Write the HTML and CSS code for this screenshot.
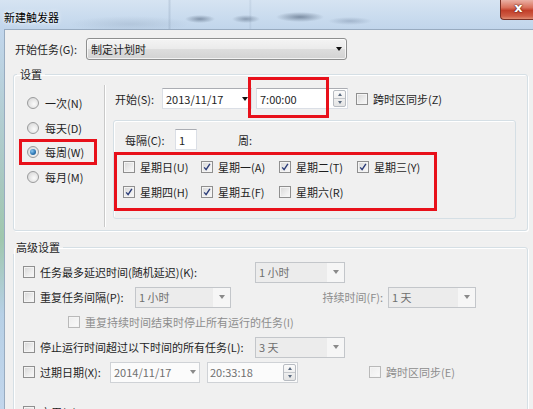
FILE: index.html
```html
<!DOCTYPE html>
<html lang="zh-CN">
<head>
<meta charset="utf-8">
<title>新建触发器</title>
<link rel="stylesheet" href="styles.css">
</head>
<body>
<div class="window">
  <div class="titlebar">
    <span class="title">新建触发器</span>
    <span class="close">x</span>
  </div>
  <div class="frame">
    <div class="frame-edge"></div>
    <div class="client">
      <div class="row-begin">
        <span class="lbl-begin">开始任务(G):</span>
        <div class="combo combo-main"><span class="ctext">制定计划时</span><i class="arrow"></i></div>
      </div>

      <fieldset class="group group-settings">
        <legend>设置</legend>
        <div class="settings">
          <div class="radios">
            <div class="radio"><span class="rb"></span><span>一次(N)</span></div>
            <div class="radio"><span class="rb"></span><span>每天(D)</span></div>
            <div class="radio hl"><span class="rb on"></span><span>每周(W)</span></div>
            <div class="radio"><span class="rb"></span><span>每月(M)</span></div>
          </div>
          <div class="sep"></div>
          <div class="sched">
            <div class="start-row">
              <span class="lbl-start">开始(S):</span>
              <div class="field date"><span class="ctext">2013/11/17</span><i class="arrow"></i></div>
              <div class="field time mark">
                <span class="ctext">7:00:00</span>
                <span class="spin"><i class="up"></i><i class="down"></i></span>
              </div>
              <div class="check sync"><span class="cb"></span><span>跨时区同步(Z)</span></div>
            </div>
            <div class="weekly">
              <div class="every-row">
                <span class="lbl-every">每隔(C):</span>
                <div class="field num"><span class="ctext">1</span></div>
                <span class="lbl-week">周:</span>
              </div>
              <div class="days">
                <div class="check"><span class="cb"></span><span>星期日(U)</span></div>
                <div class="check"><span class="cb"><svg viewBox="0 0 12 12" width="12" height="12"><path d="M3.2 6.4 L5.1 8.6 L8.9 2.8" fill="none" stroke="#2b3c78" stroke-width="1.4"/></svg></span><span>星期一(A)</span></div>
                <div class="check"><span class="cb"><svg viewBox="0 0 12 12" width="12" height="12"><path d="M3.2 6.4 L5.1 8.6 L8.9 2.8" fill="none" stroke="#2b3c78" stroke-width="1.4"/></svg></span><span>星期二(T)</span></div>
                <div class="check"><span class="cb"><svg viewBox="0 0 12 12" width="12" height="12"><path d="M3.2 6.4 L5.1 8.6 L8.9 2.8" fill="none" stroke="#2b3c78" stroke-width="1.4"/></svg></span><span>星期三(Y)</span></div>
                <div class="check"><span class="cb"><svg viewBox="0 0 12 12" width="12" height="12"><path d="M3.2 6.4 L5.1 8.6 L8.9 2.8" fill="none" stroke="#2b3c78" stroke-width="1.4"/></svg></span><span>星期四(H)</span></div>
                <div class="check"><span class="cb"><svg viewBox="0 0 12 12" width="12" height="12"><path d="M3.2 6.4 L5.1 8.6 L8.9 2.8" fill="none" stroke="#2b3c78" stroke-width="1.4"/></svg></span><span>星期五(F)</span></div>
                <div class="check"><span class="cb"></span><span>星期六(R)</span></div>
              </div>
            </div>
          </div>
        </div>
      </fieldset>

      <fieldset class="group group-adv">
        <legend>高级设置</legend>
        <div class="adv-row">
          <div class="check w232"><span class="cb"></span><span>任务最多延迟时间(随机延迟)(K):</span></div>
          <div class="combo dis w90"><span class="ctext">1 小时</span><span class="abox"><i class="arrow"></i></span></div>
        </div>
        <div class="adv-row">
          <div class="check w112"><span class="cb"></span><span>重复任务间隔(P):</span></div>
          <div class="combo dis w96"><span class="ctext">1 小时</span><span class="abox"><i class="arrow"></i></span></div>
          <span class="lbl-dur">持续时间(F):</span>
          <div class="combo dis w88"><span class="ctext">1 天</span><span class="abox"><i class="arrow"></i></span></div>
        </div>
        <div class="adv-row">
          <div class="check indent dim"><span class="cb"></span><span>重复持续时间结束时停止所有运行的任务(I)</span></div>
        </div>
        <div class="adv-row">
          <div class="check w232"><span class="cb"></span><span>停止运行时间超过以下时间的所有任务(L):</span></div>
          <div class="combo dis w90"><span class="ctext">3 天</span><span class="abox"><i class="arrow"></i></span></div>
        </div>
        <div class="adv-row">
          <div class="check w87"><span class="cb"></span><span>过期日期(X):</span></div>
          <div class="field date dis"><span class="ctext">2014/11/17</span><i class="arrow"></i></div>
          <div class="field time2 dis">
            <span class="ctext">20:33:18</span>
            <span class="spin"><i class="up"></i><i class="down"></i></span>
          </div>
          <div class="check sync2 dim"><span class="cb"></span><span>跨时区同步(E)</span></div>
        </div>
        <div class="adv-row enable">
          <div class="check"><span class="cb"></span><span>启用(B)</span></div>
        </div>
      </fieldset>
    </div>
  </div>
</div>
</body>
</html>
```

FILE: styles.css
```css
*, *::before, *::after { box-sizing: border-box; }

html, body { margin: 0; padding: 0; }

body {
  width: 533px;
  height: 409px;
  overflow: hidden;
  font-family: "Noto Sans CJK SC", "Noto Sans", sans-serif;
  font-size: 11px;
  line-height: 14px;
  color: #1e1e1e;
  background: #c4d7ec;
}

.window {
  width: 533px;
  height: 409px;
  display: flex;
  flex-direction: column;
}

/* ---------- title bar ---------- */
.titlebar {
  height: 29px;
  flex: none;
  display: flex;
  align-items: flex-start;
  background:
    radial-gradient(ellipse 15px 4px at 200px 19px, rgba(60, 78, 102, .5), transparent),
    radial-gradient(ellipse 14px 4px at 246px 19px, rgba(60, 78, 102, .45), transparent),
    radial-gradient(ellipse 24px 5px at 300px 17px, rgba(60, 78, 102, .55), transparent),
    radial-gradient(ellipse 22px 4px at 350px 21px, rgba(80, 100, 130, .3), transparent),
    radial-gradient(ellipse 60px 8px at 130px 24px, rgba(110, 130, 155, .2), transparent),
    linear-gradient(90deg, transparent 168px, rgba(130, 150, 175, .25) 169px, rgba(130, 150, 175, .25) 170px, transparent 171px,
      transparent 249px, rgba(130, 150, 175, .2) 250px, transparent 252px),
    linear-gradient(180deg, #d6e4f2 0%, #c9dbee 60%, #c1d5eb 100%);
}

.title {
  padding: 10px 0 0 4px;
  color: #000;
  text-shadow: 0 0 5px #fff, 0 0 3px #eaf2fb;
}

.close {
  margin-left: auto;
  width: 33px;
  height: 20px;
  padding-left: 3px;
  background: linear-gradient(180deg, #eab0a4 0%, #d9705b 40%, #c23f2a 55%, #cf5d45 85%, #e08e74 100%);
  border: 1px solid #7a3025;
  border-top: none;
  border-right: none;
  border-radius: 0 0 0 4px;
  color: #fff;
  font-family: "DejaVu Sans", sans-serif;
  font-weight: bold;
  font-size: 13px;
  line-height: 16px;
  text-align: center;
  text-shadow: 0 0 2px #5a1a10, 0 0 1px #5a1a10;
}

/* ---------- frame & client ---------- */
.frame {
  flex: 1;
  display: flex;
  min-height: 0;
}

.frame-edge {
  width: 4px;
  flex: none;
  background: linear-gradient(180deg, #c2d6ec 0%, #a8c8c0 40%, #9fc7ad 55%, #b7d0e6 75%, #c2d6ec 100%);
}

.client {
  flex: 1;
  min-width: 0;
  overflow: hidden;
  background: #f0f0f0;
  border-top: 1px solid #98abc0;
  border-left: 1px solid #98abc0;
  padding: 8px 0 0 10px;
}

/* ---------- common controls ---------- */
.ctext { flex: 1; white-space: nowrap; }

.arrow {
  display: block;
  width: 0;
  height: 0;
  border-left: 3.5px solid transparent;
  border-right: 3.5px solid transparent;
  border-top: 4px solid #111;
}

.field {
  display: flex;
  align-items: center;
  height: 21px;
  background: #fff;
  border: 1px solid #dbdfe6;
  border-top-color: #abadb3;
  padding-left: 3px;
}

.combo {
  display: flex;
  align-items: center;
  height: 22px;
}

.combo-main {
  width: 261px;
  padding: 0 4px 0 4px;
  border: 1px solid #8e8f8f;
  border-radius: 3px;
  background: linear-gradient(180deg, #f4f4f4 0%, #ebebeb 48%, #dddddd 52%, #d2d2d2 100%);
  box-shadow: inset 0 0 0 1px rgba(255, 255, 255, .7);
}

.check {
  display: flex;
  align-items: center;
  gap: 5px;
  white-space: nowrap;
}

.cb {
  width: 12px;
  height: 12px;
  flex: none;
  border: 1px solid #8f8f8f;
  background: linear-gradient(135deg, #d6d6d6 0%, #ededed 60%, #fafafa 100%);
  box-shadow: inset 0 0 0 1px #f4f4f4;
  display: flex;
}

.cb svg { margin: -1px; }

.dim { color: #8d8d8d; }
.dim .cb {
  border-color: #b9b9b9;
  background: linear-gradient(135deg, #ececec, #fafafa);
}

.spin {
  width: 13px;
  height: 17px;
  margin-left: auto;
  margin-right: 1px;
  display: flex;
  flex-direction: column;
  border: 1px solid #b8bcc2;
  border-radius: 2px;
  background: linear-gradient(180deg, #fbfbfb, #e4e4e4);
}

.spin i {
  flex: 1;
  display: flex;
  align-items: center;
  justify-content: center;
}

.spin .up { border-bottom: 1px solid #c5c8cc; }

.spin .up::before,
.spin .down::before {
  content: "";
  border-left: 2.5px solid transparent;
  border-right: 2.5px solid transparent;
}

.spin .up::before { border-bottom: 3px solid #5b6b80; }
.spin .down::before { border-top: 3px solid #5b6b80; }

/* ---------- first row ---------- */
.row-begin {
  display: flex;
  align-items: center;
  height: 22px;
}

.lbl-begin { width: 71px; }

/* ---------- group boxes ---------- */
.group {
  margin: 0 0 0 -2px;
  min-width: 0;
  width: 515px;
  border: 1px solid #d5dfe5;
  border-radius: 3px;
  box-shadow: inset 1px 1px 0 #fff, 1px 1px 0 #fff;
}

.group legend {
  padding: 0 3px;
  margin-left: -10px;
  line-height: 14px;
}

.group-settings {
  margin-top: 7px;
  padding: 4px 11px 3px 13px;
}

.settings {
  display: flex;
  height: 142px;
}

.radios {
  width: 77px;
  flex: none;
  padding-top: 5.7px;
}

.radio {
  display: flex;
  align-items: center;
  gap: 6px;
  height: 24.6px;
  white-space: nowrap;
}

.radio.hl {
  height: 26px;
  width: 78px;
  margin: -0.7px 0 -0.7px -8px;
  padding-left: 5px;
  border: 3px solid #e8101a;
}

.rb {
  width: 12px;
  height: 12px;
  flex: none;
  border-radius: 50%;
  border: 1px solid #9a9b9c;
  background: radial-gradient(circle at 60% 60%, #fbfbfb 0%, #e2e2e2 60%, #cfcfcf 100%);
  display: flex;
  align-items: center;
  justify-content: center;
}

.rb.on::before {
  content: "";
  width: 6px;
  height: 6px;
  border-radius: 50%;
  background: radial-gradient(circle at 35% 35%, #8cc8f2 0%, #2f79b6 55%, #1a4a78 100%);
}

.sep {
  width: 2px;
  flex: none;
  border-left: 1px solid #c9c9c9;
  border-right: 1px solid #ffffff;
}

.sched {
  flex: 1;
  min-width: 0;
  padding-left: 7px;
}

.start-row {
  display: flex;
  align-items: center;
  margin-top: 3px;
  padding-left: 2px;
  height: 21px;
}

.lbl-start { width: 47px; }

.date {
  width: 90px;
  padding-right: 3px;
}

.time {
  width: 92px;
  margin-left: 4px;
  position: relative;
}

/* red annotation frame drawn over the time field */
.mark::after {
  content: "";
  position: absolute;
  left: -9px;
  top: -12px;
  width: 81px;
  height: 41px;
  border: 3px solid #e8101a;
}

.sync { margin-left: 8px; }

.weekly {
  margin-top: 11px;
  height: 99px;
  border: 1px solid #d5dfe5;
  border-radius: 3px;
  box-shadow: inset 1px 1px 0 #fff;
  padding-top: 8px;
}

.every-row {
  display: flex;
  align-items: center;
  height: 21px;
  margin-left: 11px;
}

.lbl-every { width: 50px; }

.num { width: 22px; }

.lbl-week { margin-left: 41px; }

.days {
  margin-top: 2px;
  width: 323px;
  height: 59px;
  border: 3px solid #e8101a;
  padding: 0 0 4px 6px;
  display: grid;
  grid-template-columns: repeat(4, 78px);
  grid-template-rows: 24px 25px;
  align-items: center;
}

/* ---------- advanced ---------- */
.group-adv {
  margin-top: 9px;
  padding: 5.5px 11px 0 9px;
  height: 200px;
}

.adv-row {
  display: flex;
  align-items: center;
  height: 25px;
}

.w232 { width: 232px; }
.w112 { width: 112px; }
.w87 { width: 87px; }

.combo.dis {
  height: 21px;
  border: 1px solid #c3c6ca;
  background: #ececec;
  color: #6f6f6f;
  padding-left: 3px;
}

.combo.dis .abox {
  width: 17px;
  align-self: stretch;
  background: #f6f6f6;
  display: flex;
  align-items: center;
  justify-content: center;
}

.combo.dis .arrow,
.field.dis .arrow { border-top-color: #8a8a8a; }

.w90 { width: 90px; }
.w96 { width: 96px; }
.w88 { width: 88px; }

.lbl-dur {
  width: 157px;
  text-align: right;
  padding-right: 5px;
  color: #8d8d8d;
}

.indent { margin-left: 45px; }

.field.dis {
  background: #fbfbfb;
  border-color: #cfd2d6;
  color: #6f6f6f;
}

.time2 {
  width: 91px;
  margin-left: 7px;
  padding-left: 2px;
}

.sync2 { margin-left: 71px; }

.enable { margin-top: 15px; }
```
